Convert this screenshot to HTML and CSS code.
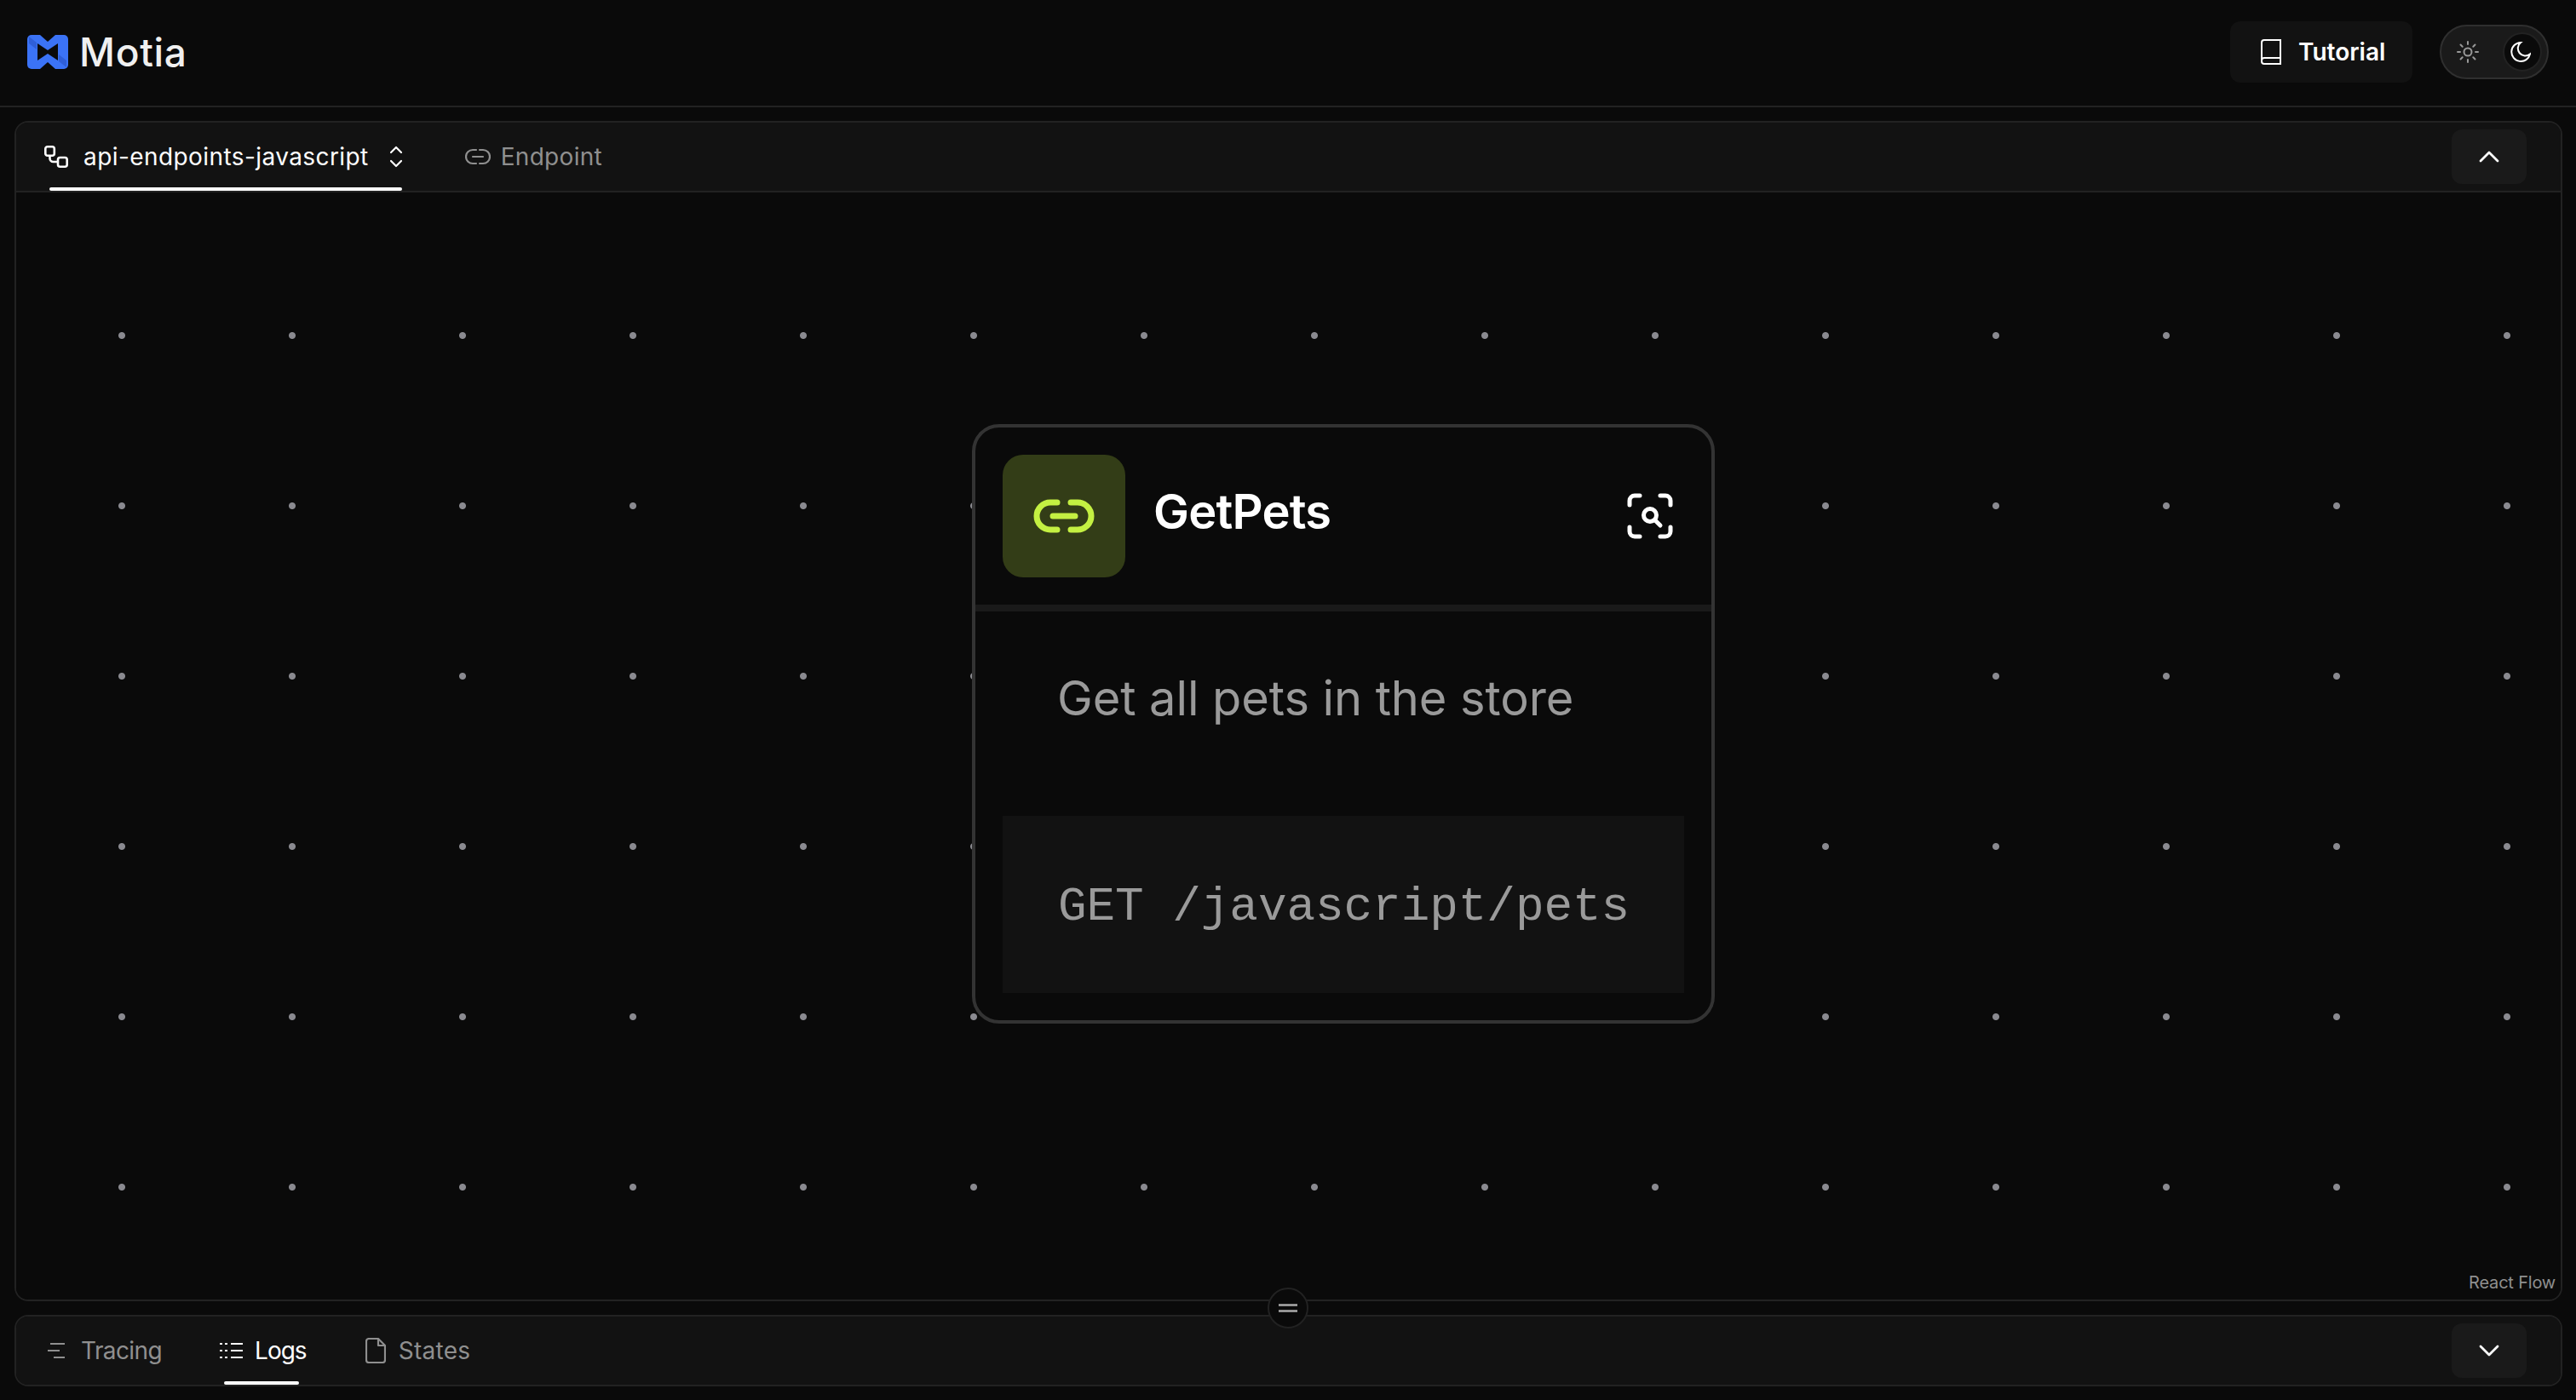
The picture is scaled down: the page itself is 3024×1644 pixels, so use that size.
FILE: index.html
```html
<!DOCTYPE html>
<html lang="en">
<head>
    <meta charset="UTF-8">
    <title>Motia</title>
    <link rel="stylesheet" href="styles.css">
</head>
<body>
    <header class="topbar">
        <div class="brand">
            <svg class="brand-logo" viewBox="0 0 48 40"><rect width="48" height="40" rx="5" fill="#3b73f6"/><path d="M2 2l9 7v8L2 10zM46 38l-9-7v-8l9 7z" fill="#2f5fd8"/><path d="M15 0h18L24 8zM15 40h18L24 32zM12 10l12 8 12-8v20l-12-8-12 8z" fill="#0a0a0a"/></svg>
            <span class="brand-name">Motia</span>
        </div>
        <div class="topbar-actions">
            <button class="tutorial-btn">
                <svg class="icon-book" viewBox="0 0 24 30" fill="none" stroke="#fff" stroke-width="2"><path d="M1 26V4a3 3 0 0 1 3-3h19v28H4a3 3 0 0 1-3-3v-1a3 3 0 0 1 3-3h19"/></svg>
                Tutorial
            </button>
            <div class="theme-toggle">
                <svg class="icon-sun" viewBox="0 0 26 26" fill="none" stroke="#999" stroke-width="2" stroke-linecap="round"><circle cx="13" cy="13" r="4.500"/><path d="M13 1v3M13 22v3M1 13h3M22 13h3M4.500 4.500l2.200 2.200M19.300 19.300l2.200 2.200M4.500 21.500l2.200-2.200M19.300 6.700l2.200-2.200"/></svg>
                <span class="toggle-thumb">
                    <svg class="icon-moon" viewBox="0 0 24 24" fill="none" stroke="#fff" stroke-width="2"><path d="M12 1a11 11 0 1 0 11 13.500A8.500 8.500 0 0 1 12 1z"/></svg>
                </span>
            </div>
        </div>
    </header>

    <main class="workspace">
        <section class="panel flow-panel">
            <div class="tabbar">
                <div class="tab tab-active tab-flow">
                    <svg class="icon-flow" viewBox="0 0 28 26" fill="none" stroke="#fff" stroke-width="2.600"><rect x="1.300" y="1.300" width="10.500" height="10.500" rx="2.500"/><rect x="16" y="14" width="10.700" height="10.700" rx="2.500"/><path d="M6.500 12v3a4 4 0 0 0 4 4H16"/></svg>
                    <span>api-endpoints-javascript</span>
                    <svg class="icon-updown" viewBox="0 0 16 26" fill="none" stroke="#fff" stroke-width="2.200" stroke-linecap="round" stroke-linejoin="round"><path d="M2 8l6-6 6 6M2 18l6 6 6-6"/></svg>
                </div>
                <div class="tab tab-endpoint">
                    <svg class="icon-link-small" viewBox="0 0 30 20" fill="none" stroke="#8f8f8f" stroke-width="2.200" stroke-linecap="round"><path d="M13 2H9a8 8 0 0 0 0 16h4M17 2h4a8 8 0 0 1 0 16h-4M9 10h12"/></svg>
                    <span>Endpoint</span>
                </div>
                <button class="collapse-btn">
                    <svg class="icon-chevron" viewBox="0 0 24 14" fill="none" stroke="#fff" stroke-width="2.800" stroke-linecap="round" stroke-linejoin="round"><path d="M2 12L12 2l10 10"/></svg>
                </button>
            </div>
            <div class="canvas">
                <article class="node">
                    <div class="node-head">
                        <div class="node-icon">
                            <svg class="icon-link-large" viewBox="0 0 72 40" fill="none" stroke="#c4f042" stroke-width="7" stroke-linecap="round"><path d="M28 4H20a16 16 0 0 0 0 32h8M44 4h8a16 16 0 0 1 0 32h-8M23 20h26"/></svg>
                        </div>
                        <h2 class="node-title">GetPets</h2>
                        <svg class="icon-focus" viewBox="0 0 54 54" fill="none" stroke="#fff" stroke-width="5" stroke-linecap="round"><path d="M3 14V9a6 6 0 0 1 6-6h6M39 3h6a6 6 0 0 1 6 6v5M51 40v5a6 6 0 0 1-6 6h-6M15 51H9a6 6 0 0 1-6-6v-5"/><circle cx="27" cy="26" r="7.500"/><path d="M33 32l6 6"/></svg>
                    </div>
                    <p class="node-desc">Get all pets in the store</p>
                    <div class="node-route">GET /javascript/pets</div>
                </article>
                <span class="attribution">React Flow</span>
            </div>
        </section>

        <button class="resize-handle">
            <svg viewBox="0 0 22 10" stroke="#aaa" stroke-width="2.500"><path d="M0 1.500h22M0 8.500h22"/></svg>
        </button>

        <section class="panel bottom-panel">
            <div class="tabbar">
                <div class="tab tab-tracing">
                    <svg class="icon-tracing" viewBox="0 0 20 18" stroke="#8f8f8f" stroke-width="2.200"><path d="M3 1h17M0 9h14M7 17h13"/></svg>
                    <span>Tracing</span>
                </div>
                <div class="tab tab-active tab-logs">
                    <svg class="icon-logs" viewBox="0 0 27 20" stroke="#fff" stroke-width="2.200"><path d="M0 2h3M6 2h3M13 2h14M0 10h3M6 10h3M13 10h14M0 18h3M6 18h3M13 18h14"/></svg>
                    <span>Logs</span>
                </div>
                <div class="tab tab-states">
                    <svg class="icon-file" viewBox="0 0 24 30" fill="none" stroke="#8f8f8f" stroke-width="2.200" stroke-linejoin="round"><path d="M15 1H4a3 3 0 0 0-3 3v22a3 3 0 0 0 3 3h16a3 3 0 0 0 3-3V9z"/><path d="M15 1v8h8"/></svg>
                    <span>States</span>
                </div>
                <button class="collapse-btn">
                    <svg class="icon-chevron" viewBox="0 0 24 14" fill="none" stroke="#fff" stroke-width="2.800" stroke-linecap="round" stroke-linejoin="round"><path d="M2 2l10 10L22 2"/></svg>
                </button>
            </div>
        </section>
    </main>
</body>
</html>
```
FILE: styles.css
```css
* {
    box-sizing: border-box;
}

html, body {
    margin: 0;
    height: 100%;
}

body {
    display: flex;
    flex-direction: column;
    overflow: hidden;
    background-color: #0a0a0a;
    color: #fff;
    font-family: "Inter", "Liberation Sans", sans-serif;
}

button {
    display: flex;
    align-items: center;
    border: none;
    color: inherit;
    font-family: inherit;
}

svg {
    display: block;
    flex: none;
}

.topbar {
    display: flex;
    align-items: center;
    justify-content: space-between;
    height: 126px;
    padding: 0 32px 2px;
    border-bottom: 2px solid #222;
}

.brand {
    display: flex;
    align-items: center;
    gap: 13px;
}

.brand-logo {
    width: 48px;
    height: 40px;
}

.brand-name {
    font-size: 46px;
    font-weight: 500;
    letter-spacing: 0.7px;
    color: #f0f0f0;
}

.topbar-actions {
    display: flex;
    align-items: center;
    gap: 32px;
}

.tutorial-btn {
    gap: 20px;
    height: 72px;
    width: 214px;
    padding-left: 36px;
    border-radius: 12px;
    background-color: #121212;
    font-size: 28px;
    font-weight: 600;
}

.icon-book {
    width: 24px;
    height: 30px;
}

.theme-toggle {
    display: flex;
    align-items: center;
    justify-content: space-between;
    width: 128px;
    height: 64px;
    padding: 0 6px 0 18px;
    border: 2px solid #2f2f2f;
    border-radius: 32px;
    background-color: #1a1a1a;
}

.icon-sun {
    width: 26px;
    height: 26px;
}

.toggle-thumb {
    display: flex;
    align-items: center;
    justify-content: center;
    width: 46px;
    height: 46px;
    border: 2px solid #222;
    border-radius: 50%;
    background-color: #0a0a0a;
}

.icon-moon {
    width: 24px;
    height: 24px;
    margin-right: 4px;
}

.workspace {
    position: relative;
    display: flex;
    flex-direction: column;
    flex: 1;
    gap: 16px;
    padding: 16px 16px 16px 17px;
}

.panel {
    display: flex;
    flex-direction: column;
    border: 2px solid #222;
    border-radius: 16px;
    overflow: hidden;
}

.flow-panel {
    flex: 1;
}

.bottom-panel {
    height: 84px;
    background-color: #121212;
}

.tabbar {
    display: flex;
    align-items: center;
    flex: none;
    height: 80px;
    padding: 0 40px 0 0;
    background-color: #121212;
}

.flow-panel .tabbar {
    height: 82px;
    border-bottom: 2px solid #222;
}

.tab {
    position: relative;
    display: flex;
    align-items: center;
    height: 100%;
    font-size: 28px;
    color: #8f8f8f;
}

.tab-active {
    color: #fff;
}

.tab-active::after {
    content: "";
    position: absolute;
    bottom: 0;
    height: 4px;
    border-radius: 2px;
    background-color: #fff;
}

.tab-flow {
    gap: 18px;
    margin-left: 33px;
    letter-spacing: 0.42px;
}

.tab-flow::after {
    left: 6px;
    width: 414px;
}

.icon-flow {
    width: 28px;
    height: 26px;
}

.icon-updown {
    width: 16px;
    height: 26px;
    margin-left: 6px;
}

.tab-endpoint {
    gap: 12px;
    margin-left: 73px;
    letter-spacing: 0.3px;
}

.icon-link-small {
    width: 30px;
    height: 20px;
}

.collapse-btn {
    justify-content: center;
    width: 88px;
    height: 64px;
    margin-left: auto;
    border-radius: 12px;
    background-color: #1a1a1a;
}

.icon-chevron {
    width: 24px;
    height: 14px;
}

/* free canvas: the dot grid and the node sit at their own coordinates */
.canvas {
    position: relative;
    flex: 1;
    background-color: #0a0a0a;
    background-image: radial-gradient(circle, #8a8a90 0, #8a8a90 3.500px, transparent 4.500px);
    background-size: 200px 200px;
    background-position: 24px 68px;
}

.node {
    position: absolute;
    left: 1122px;
    top: 272px;
    width: 872px;
    height: 704px;
    border: 4px solid #333;
    border-radius: 32px;
    background-color: #0a0a0a;
}

.node-head {
    display: flex;
    align-items: center;
    height: 216px;
    padding: 0 32px;
    border-bottom: 8px solid #1a1a1a;
}

.node-icon {
    display: flex;
    align-items: center;
    justify-content: center;
    width: 144px;
    height: 144px;
    border-radius: 24px;
    background-color: #333d17;
}

.icon-link-large {
    width: 72px;
    height: 40px;
}

.node-title {
    margin: -10px 0 0 33px;
    font-size: 56px;
    font-weight: 600;
    letter-spacing: -0.8px;
}

.icon-focus {
    width: 54px;
    height: 54px;
    margin-left: auto;
    margin-right: 13px;
}

.node-desc {
    margin: 0;
    padding: 68px 0 0 96px;
    height: 240px;
    font-size: 56px;
    line-height: 68px;
    letter-spacing: -0.1px;
    color: #9a9a9a;
}

.node-route {
    display: flex;
    align-items: center;
    height: 208px;
    margin: 0 32px;
    padding: 6px 0 0 65px;
    background-color: #121212;
    font-family: "Liberation Mono", monospace;
    font-size: 56px;
    letter-spacing: -0.05px;
    color: #9a9a9a;
}

.attribution {
    position: absolute;
    right: 6px;
    bottom: 8px;
    font-size: 20px;
    letter-spacing: -0.2px;
    color: #8f8f8f;
}

.resize-handle {
    position: absolute;
    left: 1488px;
    top: 1386px;
    justify-content: center;
    width: 48px;
    height: 48px;
    padding: 0;
    border: 2px solid #222;
    border-radius: 50%;
    background-color: #0a0a0a;
}

.resize-handle svg {
    width: 22px;
    height: 10px;
}

.tab-tracing {
    gap: 19px;
    margin-left: 37px;
    letter-spacing: -0.6px;
}

.icon-tracing {
    width: 20px;
    height: 18px;
}

.tab-logs {
    gap: 14px;
    margin-left: 68px;
    letter-spacing: -1px;
}

.tab-logs::after {
    left: 5px;
    width: 88px;
}

.icon-logs {
    width: 27px;
    height: 20px;
}

.tab-states {
    gap: 15px;
    margin-left: 69px;
    letter-spacing: 0.3px;
}

.icon-file {
    width: 24px;
    height: 30px;
}
```
